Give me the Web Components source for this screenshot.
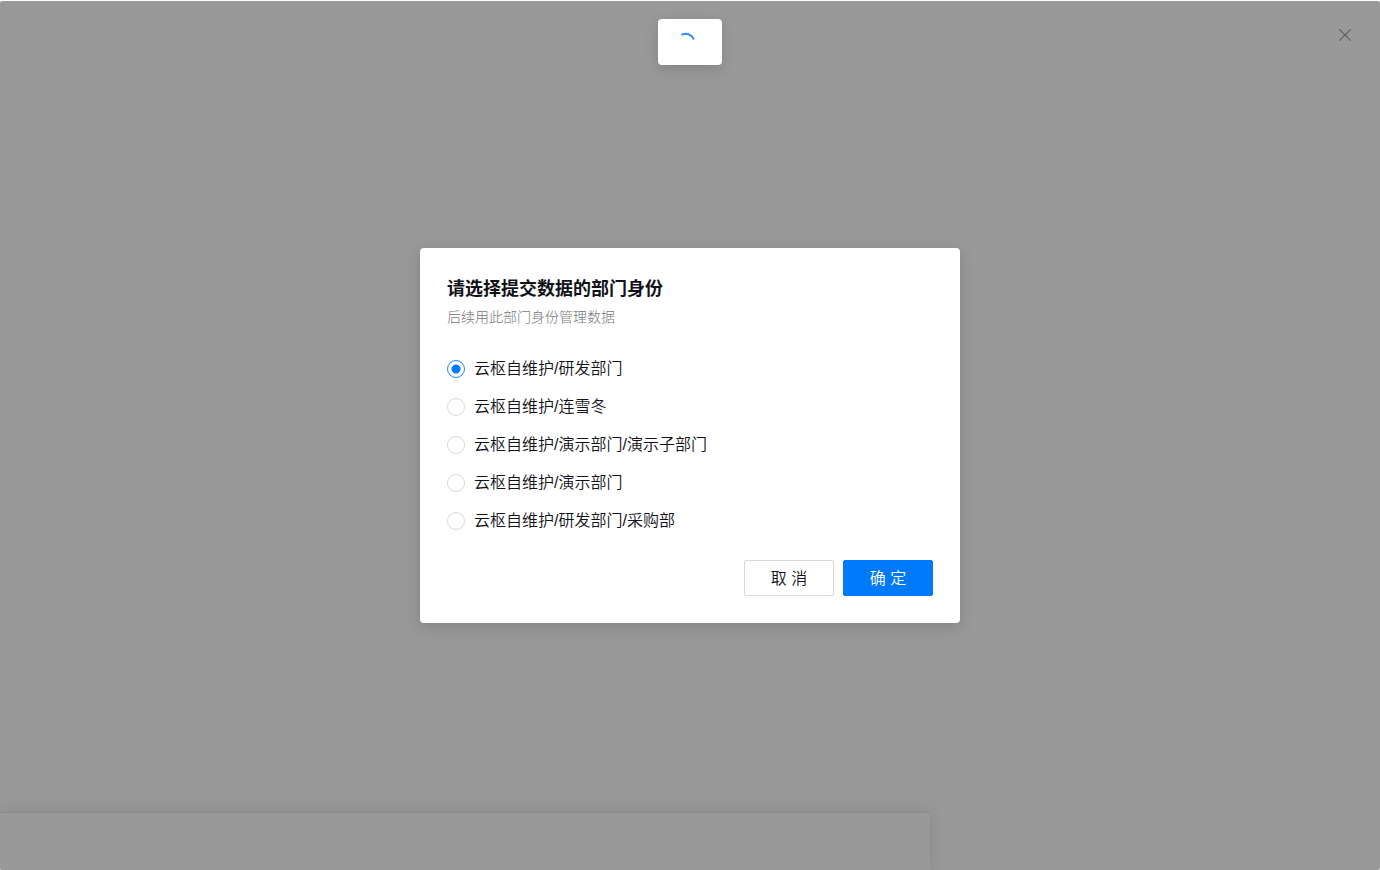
<!DOCTYPE html>
<html lang="zh-CN">
<head>
<meta charset="utf-8">
<title>请选择提交数据的部门身份</title>
<style>
html, body { height: 100%; }
body { margin: 0; background: #fff; overflow: hidden; font-family: "Liberation Sans", "Noto Sans CJK SC", sans-serif; color: #111218; }
</style>
</head>
<body>
<app-shell>
  <form-drawer slot="page"></form-drawer>
  <loading-toast slot="toast"></loading-toast>
  <identity-dialog slot="dialog">
    <span slot="title">请选择提交数据的部门身份</span>
    <span slot="hint">后续用此部门身份管理数据</span>
    <radio-list options="云枢自维护/研发部门,云枢自维护/连雪冬,云枢自维护/演示部门/演示子部门,云枢自维护/演示部门,云枢自维护/研发部门/采购部"></radio-list>
    <ui-button slot="actions">取 消</ui-button>
    <ui-button slot="actions" kind="primary">确 定</ui-button>
  </identity-dialog>
</app-shell>
<script>
class Base extends HTMLElement {
  constructor() {
    super();
    this.attachShadow({ mode: 'open' }).innerHTML = this.constructor.markup;
  }
}

customElements.define('app-shell', class extends Base {
  static markup = `
    <style>
      :host { display: grid; height: 100vh; box-sizing: border-box; padding-top: 1px; }
      .page, .mask { grid-area: 1 / 1; min-width: 0; min-height: 0; }
      .page { display: grid; background: #999; border-radius: 2px; overflow: hidden; }
      .mask { display: flex; align-items: center; justify-content: center; z-index: 1; }
      .toast { position: absolute; top: 19px; left: 0; right: 0; display: flex; justify-content: center; z-index: 2; }
    </style>
    <main class="page"><slot name="page"></slot></main>
    <div class="toast"><slot name="toast"></slot></div>
    <div class="mask"><slot name="dialog"></slot></div>`;
});

customElements.define('form-drawer', class extends Base {
  static markup = `
    <style>
      :host { display: flex; flex-direction: column; justify-content: space-between; }
      header { display: flex; justify-content: flex-end; padding: 26px 27px 0 0; }
      button { display: grid; place-items: center; width: 16px; height: 16px; padding: 0; border: 0; background: none; color: #5c5c5c; }
      footer { height: 58px; margin-right: 450px; background: #999; border-top: 1px solid #8c8c8c; box-shadow: 0 0 16px rgba(0, 0, 0, .12); box-sizing: border-box; }
    </style>
    <header><button type="button" aria-label="关闭">
      <svg width="14" height="14" viewBox="0 0 14 14" fill="none" stroke="currentColor" stroke-width="1.2"><path d="M1.3 1.3 12.7 12.7M12.7 1.3 1.3 12.7"/></svg>
    </button></header>
    <footer></footer>`;
});

customElements.define('loading-toast', class extends Base {
  static markup = `
    <style>
      :host { display: flex; justify-content: center; width: 64px; height: 46px; box-sizing: border-box; padding-top: 13px; background: #fff; border-radius: 4px; box-shadow: 0 4px 14px rgba(0, 0, 0, .15); }
    </style>
    <svg width="20" height="20" viewBox="0 0 20 20" fill="none" stroke="#2d8cff" stroke-width="1.9" stroke-linecap="round" role="img" aria-label="加载中"><path d="M2 2.6C6 .8 11.5 2 13.6 6.8"/></svg>`;
});

customElements.define('identity-dialog', class extends Base {
  static markup = `
    <style>
      :host { display: block; width: 540px; max-width: 100%; box-sizing: border-box; padding: 27px; background: #fff; border-radius: 4px; box-shadow: 0 4px 16px rgba(0, 0, 0, .15); }
      h2 { margin: 0; font-size: 18px; line-height: 28px; font-weight: 700; }
      p { margin: 4px 0 0; font-size: 14px; line-height: 20px; font-weight: 300; color: #777; }
      .body { padding: 30px 0 27px; }
      footer { display: flex; justify-content: flex-end; gap: 9px; }
    </style>
    <section role="dialog" aria-labelledby="t">
      <h2 id="t"><slot name="title"></slot></h2>
      <p><slot name="hint"></slot></p>
      <div class="body"><slot></slot></div>
      <footer><slot name="actions"></slot></footer>
    </section>`;
});

customElements.define('radio-list', class extends Base {
  static markup = `
    <style>
      :host { display: block; }
      div { display: flex; flex-direction: column; gap: 14px; }
      label { display: flex; align-items: center; gap: 9px; font-size: 16px; line-height: 24px; font-weight: 350; }
      input { appearance: none; flex: none; width: 18px; height: 18px; margin: 0; border: 1px solid #d9d9d9; border-radius: 50%; background: #fff; }
      input:checked { border-color: #1a87fb; background: radial-gradient(circle, #0079fa 4px, #fff 5px); }
    </style>
    <div role="radiogroup"></div>`;
  connectedCallback() {
    const group = this.shadowRoot.querySelector('div');
    this.getAttribute('options').split(',').forEach((name, i) => {
      const label = document.createElement('label');
      const input = document.createElement('input');
      const text = document.createElement('span');
      input.type = 'radio';
      input.name = 'dept';
      input.checked = i === 0;
      text.textContent = name;
      label.append(input, text);
      group.append(label);
    });
  }
});

customElements.define('ui-button', class extends Base {
  static markup = `
    <style>
      :host { display: block; }
      button { width: 90px; height: 36px; padding: 2px 0 0; border: 1px solid #d9d9d9; border-radius: 2px; background: #fff; color: inherit; font: 350 16px/24px "Liberation Sans", "Noto Sans CJK SC", sans-serif; box-shadow: 0 2px 0 rgba(0, 0, 0, .016); }
      :host([kind="primary"]) button { background: #0079fa; border-color: #0079fa; color: #fff; }
    </style>
    <button type="button"><slot></slot></button>`;
});
</script>
</body>
</html>
